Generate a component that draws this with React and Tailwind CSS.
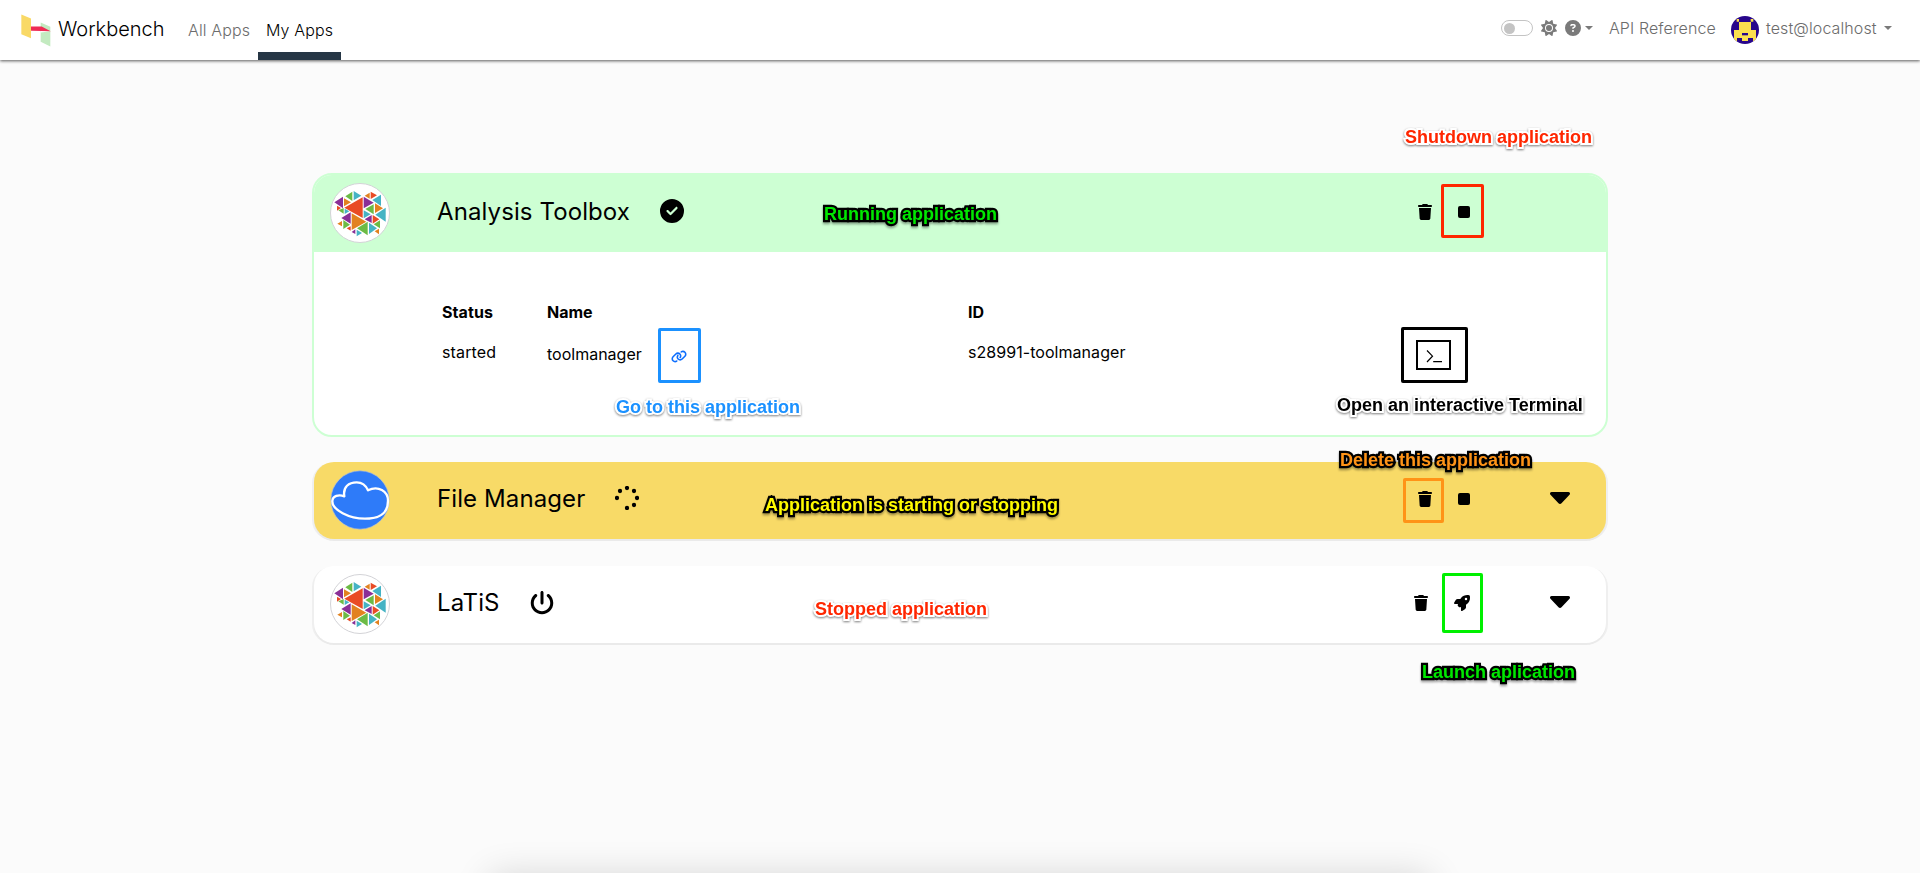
import React from "react";
import {
  FaTrash,
  FaRocket,
  FaLink,
  FaPowerOff,
  FaSun,
  FaCircleQuestion,
  FaCircleCheck,
} from "react-icons/fa6";

const PURPLE = "#8a2f97";
const GREEN = "#6cbb45";
const TEAL = "#45b3c4";
const ORANGE = "#e2821f";
const RED = "#e94b25";

// Each entry: colour and the three corners of one mosaic triangle.
const TRIANGLES = [
  [PURPLE, "13,58 39,41 39,76"],
  [GREEN, "46,40 67,26 67,54"],
  [TEAL, "71,24 71,52 94,38"],
  [ORANGE, "42,46 42,70 63,58"],
  [RED, "43,74 98,43 98,105"],
  [RED, "21,68 21,83 33,75"],
  [GREEN, "25,82 41,75 41,92"],
  [TEAL, "44,77 44,93 58,85"],
  [PURPLE, "34,105 62,88 62,122"],
  [ORANGE, "65,91 65,141 109,116"],
  [PURPLE, "101,41 101,76 131,59"],
  [ORANGE, "104,38 119,29 119,47"],
  [RED, "122,26 122,48 141,37"],
  [TEAL, "127,51 153,35 153,69"],
  [GREEN, "106,78 131,64 131,94"],
  [ORANGE, "135,61 135,90 159,76"],
  [TEAL, "136,95 167,74 167,116"],
  [TEAL, "101,82 101,106 122,94"],
  [PURPLE, "104,109 125,96 125,120"],
  [RED, "128,96 128,122 148,109"],
  [GREEN, "81,136 113,116 113,157"],
  [TEAL, "117,119 117,153 141,136"],
  [GREEN, "131,124 150,112 150,136"],
  [ORANGE, "22,122 36,114 36,130"],
  [GREEN, "40,111 40,138 60,125"],
  [RED, "50,136 62,130 62,143"],
  [PURPLE, "65,147 76,139 76,153"],
  [TEAL, "80,140 80,160 96,150"],
  [ORANGE, "134,145 147,137 147,154"],
];

function MosaicLogo() {
  return (
    <svg viewBox="0 0 180 180" className="size-[60px] shrink-0">
      <circle cx="90" cy="90" r="88.5" fill="#fff" stroke="#d3d3d7" strokeWidth="3" />
      {TRIANGLES.map(([fill, points]) => (
        <polygon key={points} points={points} fill={fill} />
      ))}
    </svg>
  );
}

function CloudLogo() {
  return (
    <svg viewBox="0 0 180 180" className="size-[60px] shrink-0">
      <circle cx="90" cy="90" r="87.5" fill="#2e7bf9" stroke="#b9c3cf" strokeWidth="2" />
      <path
        d="M43 79C38 50 57 37 80 37C96 37 108 47 114 61C145 45 174 64 174 92C174 137 141 146 105 146C58 146 6 120 7 93C8 78 26 72 43 79Z"
        fill="none"
        stroke="#fff"
        strokeWidth="7"
        strokeLinejoin="round"
      />
    </svg>
  );
}

function WorkbenchLogo() {
  return (
    <svg viewBox="0 0 90 98" className="h-[33px] w-[30px] shrink-0">
      <polygon points="1,1 30,13 30,72 1,60" fill="#f9d966" />
      <polygon points="59,25 88,38 88,97 59,83" fill="#c3eac0" />
      <polygon points="59,50 89,51 59,55" fill="#fff" />
      <polygon points="30,37 62,37 89,51 30,50" fill="#ef2b55" />
    </svg>
  );
}

function Avatar() {
  return (
    <svg viewBox="0 0 84 84" className="size-7 shrink-0">
      <defs>
        <clipPath id="avatar">
          <circle cx="42" cy="42" r="42" />
        </clipPath>
      </defs>
      <g clipPath="url(#avatar)">
        <rect width="84" height="84" fill="#28068b" />
        <path
          d="M17 9h7v8h-7zM59 9h8v8h-8zM24 18h36v24h15v33H66V66H51v9H33v-9H18v9H9V42h15z"
          fill="#fbdf4f"
        />
        <rect x="33" y="51" width="18" height="7" fill="#28068b" />
      </g>
    </svg>
  );
}

function SmallCaret() {
  return (
    <svg viewBox="0 0 8 4" className="h-1 w-2 shrink-0">
      <path d="M0 0h8L4 4z" fill="#7a7a7a" />
    </svg>
  );
}

function Caret() {
  return (
    <svg viewBox="0 0 20 12" className="mb-[5px] h-3 w-5 shrink-0">
      <path d="M1.5 0h17c1.4 0 2 1.8 1 2.8l-8 8.5c-.8.9-2.2.9-3 0l-8-8.5C-.5 1.8.1 0 1.5 0z" />
    </svg>
  );
}

function Spinner() {
  const dots = [[12, 2], [19, 5], [22, 12], [19, 19], [12, 22], [2, 12], [5, 5]];
  return (
    <svg viewBox="0 0 24 24" className="size-6">
      {dots.map(([x, y]) => (
        <circle key={`${x}-${y}`} cx={x} cy={y} r="2.15" />
      ))}
    </svg>
  );
}

function StopIcon() {
  return <span className="size-3 rounded-[2px] bg-black" />;
}

function CardHead({ logo, title, icon, actions, caret, className }) {
  return (
    <div className={`flex items-center ${className}`}>
      <div className="flex w-[107px] shrink-0">{logo}</div>
      {title}
      <div className="flex grow">{icon}</div>
      <div className="flex w-[132px] items-center pb-1">{actions}</div>
      <div className="flex w-14">{caret}</div>
    </div>
  );
}

const TITLE = "pb-1 text-2xl leading-[30px] tracking-[.1px] whitespace-nowrap";
const CARD_EDGE = "shadow-[0_2px_0_0_#eaeaea,2px_1px_0_0_#efefef,-2px_1px_0_0_#efefef]";
const DARK_OUTLINE = "[-webkit-text-stroke:4.5px_#000] drop-shadow-[0_2px_1px_rgba(0,0,0,.35)]";
const LIGHT_OUTLINE = "[-webkit-text-stroke:4px_#fff] drop-shadow-[0_1px_1px_rgba(0,0,0,.5)]";

function Note({ className, dark, children }) {
  return (
    <span
      className={`absolute font-['Liberation_Sans',Arial,sans-serif] text-lg leading-5 font-bold whitespace-nowrap [paint-order:stroke_fill] [stroke-linejoin:round] ${
        dark ? DARK_OUTLINE : LIGHT_OUTLINE
      } ${className}`}
    >
      {children}
    </span>
  );
}

function Frame({ className }) {
  return <span className={`absolute rounded-[2px] border-3 ${className}`} />;
}

function Header() {
  return (
    <header className="relative flex h-[60px] shrink-0 bg-white text-base font-light text-[#6c6c6c] shadow-[0_1px_3px_rgba(0,0,0,.65)]">
      <div className="flex items-center pl-[21px]">
        <WorkbenchLogo />
        <span className="mt-[-3px] ml-[7px] w-[107px] text-xl text-black">Workbench</span>
      </div>
      <nav className="ml-[15px] flex tracking-[.15px]">
        <a className="flex w-[78px] items-center pl-2">All Apps</a>
        <a className="flex w-[83px] items-center border-b-8 border-[#263645] pt-2 pl-2 text-black">
          My Apps
        </a>
      </nav>
      <div className="ml-auto flex items-center pr-7 pb-1 tracking-[.1px]">
        <span className="flex h-4 w-8 items-center rounded-full border border-[#c4c4c4] pl-0.5">
          <span className="size-[11px] rounded-full bg-[#c4c4c4]" />
        </span>
        <FaSun className="ml-2 size-4 text-[#7a7a7a]" />
        <FaCircleQuestion className="mr-1 ml-2 size-4 text-[#7a7a7a]" />
        <SmallCaret />
        <a className="ml-[16px] w-[122px]">API Reference</a>
        <div className="mt-1">
          <Avatar />
        </div>
        <a className="ml-[7px] w-[118px]">test@localhost</a>
        <SmallCaret />
      </div>
    </header>
  );
}

function Notes() {
  return (
    <div className="pointer-events-none absolute inset-0">
      <Note className="top-[127px] left-[1405px] text-[#ff2600]">Shutdown application</Note>
      <Note dark className="top-[204px] left-[824px] text-[#00e800]">Running application</Note>
      <Note className="top-[397px] left-[616px] text-[#1b91ff]">Go to this application</Note>
      <Note className="top-[395px] left-[1337px] text-black">Open an interactive Terminal</Note>
      <Note dark className="top-[450px] left-[1340px] text-[#ff9317]">Delete this application</Note>
      <Note dark className="top-[495px] left-[765px] text-[#fffb00]">
        Application is starting or stopping
      </Note>
      <Note className="top-[599px] left-[815px] text-[#ff2600]">Stopped application</Note>
      <Note dark className="top-[662px] left-[1422px] text-[#00e800]">Launch aplication</Note>
      <Frame className="top-[184px] left-[1441px] h-[54px] w-[43px] border-[#ff2600]" />
      <Frame className="top-[328px] left-[658px] h-[55px] w-[43px] border-[#1b91ff]" />
      <Frame className="top-[327px] left-[1401px] h-[56px] w-[67px] border-black" />
      <Frame className="top-[478px] left-[1403px] h-[45px] w-[41px] border-[#ff9317]" />
      <Frame className="top-[573px] left-[1442px] h-[60px] w-[41px] border-[#00f000]" />
    </div>
  );
}

export default function App() {
  return (
    <div className="relative flex h-[873px] w-[1920px] flex-col overflow-hidden bg-[#fbfbfb] font-['Inter',sans-serif] text-black">
      <Header />

      <main className="flex flex-col px-[312px] pt-[113px]">
        <section className="h-[264px] overflow-hidden rounded-[20px] border-2 border-[#cdffd3] bg-white">
          <CardHead
            className="h-[77px] bg-[#cdffd3] pl-4"
            logo={<div className="mb-0.5 flex"><MosaicLogo /></div>}
            title={<h2 className={`w-[223px] ${TITLE}`}>Analysis Toolbox</h2>}
            icon={<FaCircleCheck className="mb-[5px] size-6" />}
            actions={
              <>
                <FaTrash className="mr-[26px] h-4 w-3.5" />
                <StopIcon />
              </>
            }
          />
          <div className="grid grid-cols-[105px_421px_448px_1fr] pt-12 pl-[128px] text-base leading-6">
            <b className="font-bold tracking-[.1px]">Status</b>
            <b className="font-bold">Name</b>
            <b className="font-bold">ID</b>
            <span />
            <span className="pt-4 tracking-[.15px]">started</span>
            <span className="flex items-center pt-[17px]">
              <span className="w-[124px] pb-[3px]">toolmanager</span>
              <FaLink className="mt-px h-[13px] w-4 text-[#0d6efd]" />
            </span>
            <span className="pt-4 tracking-[.05px]">s28991-toolmanager</span>
            <button className="mt-4 flex h-[30px] w-[35px] items-center justify-center border-2 border-black">
              <svg viewBox="0 0 16 13" className="mt-0.5 h-[13px] w-4" fill="none" stroke="#000" strokeWidth="1.2">
                <path d="M1 .5l5.500 5.700L1 12M7.200 11.700H16" />
              </svg>
            </button>
          </div>
        </section>

        <section className={`mx-0.5 mt-[25px] h-[77px] rounded-[20px] bg-[#f8da67] ${CARD_EDGE}`}>
          <CardHead
            className="h-[77px] pl-4"
            logo={<div className="mb-0.5 flex"><CloudLogo /></div>}
            title={<h2 className={`w-[178px] ${TITLE}`}>File Manager</h2>}
            icon={<div className="mb-[5px]"><Spinner /></div>}
            actions={
              <>
                <FaTrash className="mr-[26px] h-4 w-3.5" />
                <StopIcon />
              </>
            }
            caret={<Caret />}
          />
        </section>

        <section className={`mx-0.5 mt-[27px] h-[77px] rounded-[20px] bg-white ${CARD_EDGE}`}>
          <CardHead
            className="h-[77px] pl-4"
            logo={<div className="mb-0.5 flex"><MosaicLogo /></div>}
            title={<h2 className={`w-[93px] ${TITLE}`}>LaTiS</h2>}
            icon={<FaPowerOff className="mb-1 size-6" />}
            actions={
              <div className="-ml-1 flex">
                <FaTrash className="mr-[26px] h-4 w-3.5" />
                <FaRocket className="size-4" />
              </div>
            }
            caret={<Caret />}
          />
        </section>
      </main>

      <div className="absolute top-[876px] left-[490px] h-20 w-[940px] shadow-[0_0_36px_rgba(0,0,0,.16)]" />
      <Notes />
    </div>
  );
}
